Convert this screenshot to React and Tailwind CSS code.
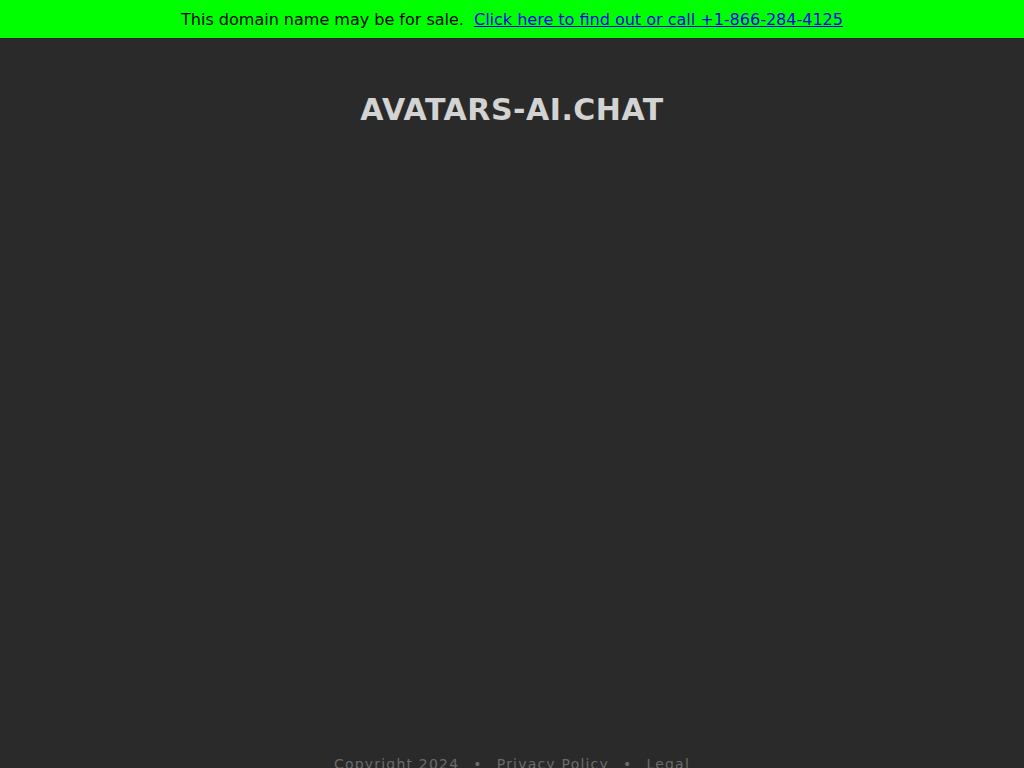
export default function App() {
  return (
    <div
      className="min-h-screen bg-[#2a2a2a]"
      style={{ fontFamily: '"DejaVu Sans", sans-serif' }}
    >
      {/* Sale banner */}
      <div className="flex h-[38px] items-center justify-center bg-[#00ff00] pt-[2px] text-base text-black">
        <span>This domain name may be for sale.</span>
        <a href="#" className="ml-[10px] text-[#0000ee] underline">
          Click here to find out or call +1-866-284-4125
        </a>
      </div>

      {/* Title */}
      <div className="flex h-[710px] justify-center pt-[52px]">
        <h1 className="text-[30px] font-bold leading-[40px] tracking-[0.5px] text-[#d3d3d3]">
          AVATARS-AI.CHAT
        </h1>
      </div>

      {/* Footer */}
      <div className="flex items-center justify-center gap-[14px] pt-[6px] pb-[20px] text-[14px] tracking-[1.2px] text-[#6b6b6b]">
        <span>Copyright 2024</span>
        <span>•</span>
        <a href="#">Privacy Policy</a>
        <span>•</span>
        <a href="#">Legal</a>
      </div>
    </div>
  );
}
